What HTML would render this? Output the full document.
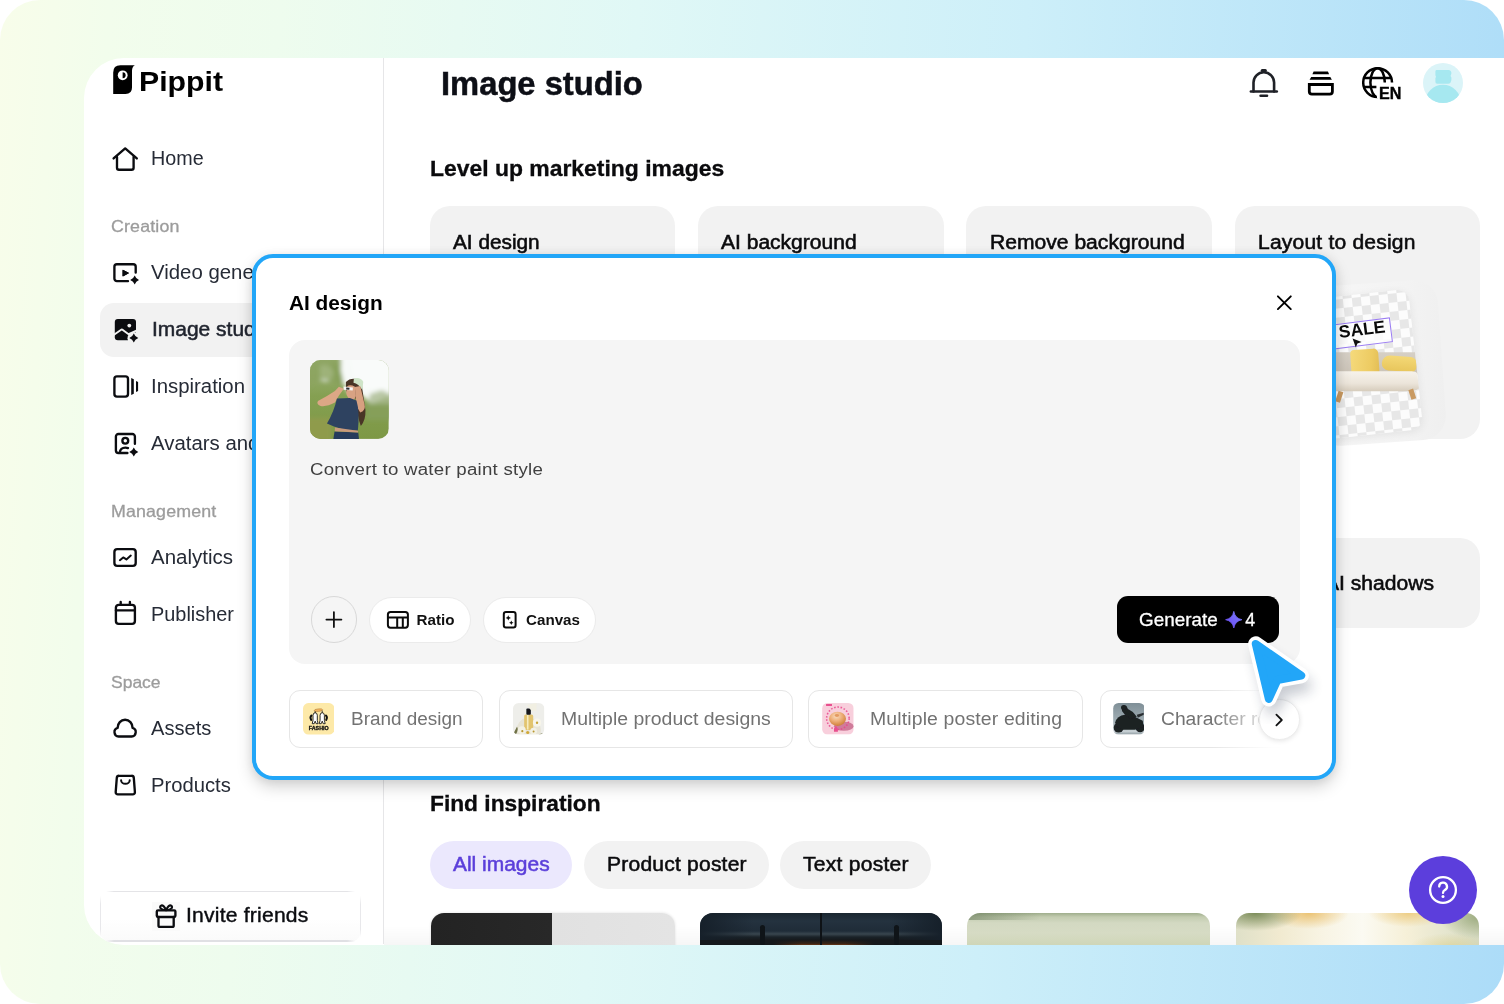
<!DOCTYPE html>
<html lang="en">
<head>
<meta charset="utf-8">
<title>Pippit - Image studio</title>
<style>
*{box-sizing:border-box;margin:0;padding:0}
html,body{width:1504px;height:1004px;overflow:hidden;background:#fff}
body{font-family:"Liberation Sans",sans-serif;color:#0f1115;position:relative}
.abs{position:absolute}
.t{position:absolute;white-space:nowrap;line-height:1}
#bg{left:0;top:0;width:1504px;height:1004px;border-radius:40px;
 background:linear-gradient(93deg,#f8fdea 0%,#f2fdec 7%,#eefcee 18%,#e0f8f6 41%,#cdeff9 66%,#acdcf8 100%)}
#app{left:84px;top:58px;width:1420px;height:886.7px;background:#fff;border-radius:40px 0 0 40px}
#clip{left:0;top:0;width:1504px;height:944.7px;overflow:hidden;will-change:transform}
</style>
</head>
<body>
<div id="bg" class="abs"></div>
<div id="app" class="abs"></div>
<div id="clip" class="abs">

<!-- p1_side -->
<div class="abs" style="left:383px;top:58px;width:1px;height:886px;background:#e6e6e8"></div>
<svg class="abs" style="left:111px;top:63px" width="28" height="34" viewBox="0 0 28 34"><path fill="#000" d="M2.2 31 V9.5 Q2.2 2.3 9.4 2.3 H23.9 Q21.2 3.6 21 7.5 V24.5 Q21 31 14.5 31 Z"/><circle cx="11.7" cy="12.3" r="4.9" fill="#fff"/><path fill="#000" d="M11.6 9.3 A3 3 0 0 1 11.6 15.3 Z"/></svg>
<div class="t" style="left:139.40px;top:68.00px;font-size:28px;color:#000;font-weight:700;transform-origin:0 0;transform:scaleX(1.0801);">Pippit</div>
<svg class="abs" style="left:111px;top:145px;" width="28" height="28" viewBox="0 0 28 28" fill="none" stroke="#0b0c10" stroke-width="2.35" stroke-linecap="round" stroke-linejoin="round"><path d="M2.6 13.4 L14.2 3.4 L25.8 13.4"/><path d="M6 12 V22.7 a2 2 0 0 0 2 2 H20.6 a2 2 0 0 0 2 -2 V12"/></svg>
<div class="t" style="left:151.30px;top:149.00px;font-size:19.5px;color:#262b36;transform-origin:0 0;transform:scaleX(1.0112);">Home</div>
<div class="t" style="left:110.80px;top:218.00px;font-size:16.5px;color:#9c9c9c;letter-spacing:0.138px;transform-origin:0 0;transform:scaleX(1.0800);-webkit-text-stroke:0.3px #9c9c9c;">Creation</div>
<svg class="abs" style="left:111px;top:258px;" width="28" height="28" viewBox="0 0 28 28" fill="none" stroke="#0b0c10" stroke-width="2.35" stroke-linecap="round" stroke-linejoin="round"><path d="M24.7 14.6 V8.7 a2.5 2.5 0 0 0 -2.5 -2.5 H5.9 a2.5 2.5 0 0 0 -2.5 2.5 V20.6 a2.5 2.5 0 0 0 2.5 2.5 H17"/><path stroke="none" fill="#0b0c10" d="M11.9 11.9 L18.1 15.1 L11.9 18.3 Z"/><path stroke="#0b0c10" stroke-width="1" fill="#0b0c10" d="M12.2 12.3 L17.4 15.1 L12.2 17.9 Z"/><path stroke="none" fill="#0b0c10" d="M23.7 17.5 Q24.915 20.785 28.2 22 Q24.915 23.215 23.7 26.5 Q22.485 23.215 19.2 22 Q22.485 20.785 23.7 17.5 Z"/></svg>
<div class="t" style="left:151.30px;top:263.00px;font-size:19.5px;color:#262b36;transform-origin:0 0;transform:scaleX(1.0450);">Video generator</div>
<div class="abs" style="left:100px;top:303px;width:272px;height:54px;border-radius:14px;background:#f2f2f2"></div>
<svg class="abs" style="left:111px;top:315px;" width="28" height="28" viewBox="0 0 28 28" fill="none" stroke="#0b0c10" stroke-width="2.35" stroke-linecap="round" stroke-linejoin="round"><rect x="3.8" y="4.1" width="21.2" height="21.2" rx="3" fill="#0b0c10" stroke="none"/><circle cx="18.3" cy="10.6" r="1.9" fill="#f2f2f2" stroke="none"/><path d="M3 19.8 L9.8 14.9 Q10.8 14.2 11.8 14.9 L17.6 19.2 L26 15.4" stroke="#f2f2f2" stroke-width="1.9"/><circle cx="22.8" cy="23.2" r="6.3" fill="#f2f2f2" stroke="none"/><path stroke="none" fill="#0b0c10" d="M22.8 18.6 Q24.015 21.885 27.3 23.1 Q24.015 24.315 22.8 27.6 Q21.585 24.315 18.3 23.1 Q21.585 21.885 22.8 18.6 Z"/></svg>
<div class="t" style="left:151.60px;top:320.00px;font-size:19.5px;color:#1f232d;transform-origin:0 0;transform:scaleX(1.0750);-webkit-text-stroke:0.5px #1f232d;">Image studio</div>
<svg class="abs" style="left:111px;top:372px;" width="28" height="28" viewBox="0 0 28 28" fill="none" stroke="#0b0c10" stroke-width="2.35" stroke-linecap="round" stroke-linejoin="round"><rect x="3.4" y="4.4" width="13.6" height="20.2" rx="2.6"/><path stroke="none" fill="#0b0c10" d="M20.2 6 L22.8 7.2 V21.8 L20.2 23 Z M25 9 L27.1 10 V19 L25 20 Z"/></svg>
<div class="t" style="left:151.30px;top:377.00px;font-size:19.5px;color:#262b36;transform-origin:0 0;transform:scaleX(1.0450);">Inspiration</div>
<svg class="abs" style="left:111px;top:429px;" width="28" height="28" viewBox="0 0 28 28" fill="none" stroke="#0b0c10" stroke-width="2.35" stroke-linecap="round" stroke-linejoin="round"><path d="M23.9 14.8 V7.5 a2.5 2.5 0 0 0 -2.5 -2.5 H7.4 a2.5 2.5 0 0 0 -2.5 2.5 V21.5 a2.5 2.5 0 0 0 2.5 2.5 H16.4"/><circle cx="14.3" cy="11.7" r="2.9"/><path d="M8.9 23.6 C8.9 20.6 11.2 18.6 14.4 18.6 C15.4 18.6 16.3 18.8 17 19.1"/><path stroke="none" fill="#0b0c10" d="M22.8 18.6 Q24.015 21.885 27.3 23.1 Q24.015 24.315 22.8 27.6 Q21.585 24.315 18.3 23.1 Q21.585 21.885 22.8 18.6 Z"/></svg>
<div class="t" style="left:151.30px;top:434.00px;font-size:19.5px;color:#262b36;transform-origin:0 0;transform:scaleX(1.0450);">Avatars and video</div>
<div class="t" style="left:110.80px;top:503.00px;font-size:16.5px;color:#9c9c9c;letter-spacing:0.122px;transform-origin:0 0;transform:scaleX(1.0800);-webkit-text-stroke:0.3px #9c9c9c;">Management</div>
<svg class="abs" style="left:111px;top:543px;" width="28" height="28" viewBox="0 0 28 28" fill="none" stroke="#0b0c10" stroke-width="2.35" stroke-linecap="round" stroke-linejoin="round"><rect x="3.4" y="6.1" width="21.3" height="16.8" rx="2.8"/><path d="M8.9 17.2 L12.2 14.4 L15.4 16.4 L19.8 12.6" stroke-width="2"/></svg>
<div class="t" style="left:151.30px;top:548.00px;font-size:19.5px;color:#262b36;transform-origin:0 0;transform:scaleX(1.0509);">Analytics</div>
<svg class="abs" style="left:111px;top:600px;" width="28" height="28" viewBox="0 0 28 28" fill="none" stroke="#0b0c10" stroke-width="2.35" stroke-linecap="round" stroke-linejoin="round"><rect x="4.9" y="4.8" width="19" height="19" rx="2.8"/><path d="M9.7 1.9 V4.8 M18.9 1.9 V4.8 M4.9 10.3 H23.9"/></svg>
<div class="t" style="left:151.30px;top:605.00px;font-size:19.5px;color:#262b36;transform-origin:0 0;transform:scaleX(1.0209);">Publisher</div>
<div class="t" style="left:110.80px;top:674.00px;font-size:16.5px;color:#9c9c9c;transform-origin:0 0;transform:scaleX(1.0601);-webkit-text-stroke:0.3px #9c9c9c;">Space</div>
<svg class="abs" style="left:111px;top:714px;" width="28" height="28" viewBox="0 0 28 28" fill="none" stroke="#0b0c10" stroke-width="2.35" stroke-linecap="round" stroke-linejoin="round"><path d="M7.6 22.5 H20.6 A4.4 4.4 0 0 0 21.6 13.9 C21.6 9.4 18.3 5.7 14.1 5.7 C9.9 5.7 6.6 9.4 6.6 13.9 A4.4 4.4 0 0 0 7.6 22.5 Z"/></svg>
<div class="t" style="left:151.30px;top:719.00px;font-size:19.5px;color:#262b36;transform-origin:0 0;transform:scaleX(1.0304);">Assets</div>
<svg class="abs" style="left:111px;top:771px;" width="28" height="28" viewBox="0 0 28 28" fill="none" stroke="#0b0c10" stroke-width="2.35" stroke-linecap="round" stroke-linejoin="round"><path d="M8 4.8 H20.6 a2.2 2.2 0 0 1 2.2 2 L23.9 21 a2.2 2.2 0 0 1 -2.2 2.4 H6.9 a2.2 2.2 0 0 1 -2.2 -2.4 L5.8 6.8 a2.2 2.2 0 0 1 2.2 -2 Z"/><path d="M10.1 9.2 a4.3 3.6 0 0 0 8.6 0" stroke-width="2"/></svg>
<div class="t" style="left:151.30px;top:776.00px;font-size:19.5px;color:#262b36;transform-origin:0 0;transform:scaleX(1.0370);">Products</div>
<div class="abs" style="left:100px;top:891px;width:261px;height:51px;border-radius:11px;background:linear-gradient(#fff 55%,#fafafa)"></div>
<div class="abs" style="left:106px;top:890.6px;width:249px;height:1.6px;background:linear-gradient(90deg,rgba(228,228,231,0),#e4e4e7 8px,#e4e4e7 241px,rgba(228,228,231,0))"></div>
<div class="abs" style="left:106px;top:940.3px;width:249px;height:1.7px;background:linear-gradient(90deg,rgba(224,224,228,0),#e0e0e4 8px,#e0e0e4 241px,rgba(224,224,228,0))"></div>
<div class="abs" style="left:99.8px;top:896px;width:1.1px;height:41px;background:linear-gradient(rgba(230,230,233,0),#e8e8eb 8px,#e8e8eb 33px,rgba(230,230,233,0))"></div>
<div class="abs" style="left:360.2px;top:896px;width:1.1px;height:41px;background:linear-gradient(rgba(230,230,233,0),#e8e8eb 8px,#e8e8eb 33px,rgba(230,230,233,0))"></div>
<div class="abs" style="left:151.6px;top:902px;width:28.6px;height:28.6px;background:#fafafa"></div>
<svg class="abs" style="left:152px;top:902px;" width="28" height="28" viewBox="0 0 28 28" fill="none" stroke="#0b0c10" stroke-width="2.35" stroke-linecap="round" stroke-linejoin="round"><rect x="4.8" y="8.4" width="18.6" height="6.6" rx="1.2"/><path d="M6.5 15 V23.4 a1.4 1.4 0 0 0 1.4 1.4 H20.3 a1.4 1.4 0 0 0 1.4 -1.4 V15"/><path d="M14 8.2 C12.8 4.4 10.4 2.6 8.8 3.8 C7.2 5 8.4 8 14 8.2 Z M14.2 8.2 C15.4 4.4 17.8 2.6 19.4 3.8 C21 5 19.8 8 14.2 8.2 Z" stroke-width="2.1"/></svg>
<div class="t" style="left:185.60px;top:906.00px;font-size:19.5px;color:#0b0c10;letter-spacing:0.207px;transform-origin:0 0;transform:scaleX(1.0800);-webkit-text-stroke:0.4px #0b0c10;">Invite friends</div>
<!-- p2_main -->
<div class="t" style="left:441.40px;top:67.00px;font-size:33px;color:#0d0f16;font-weight:700;transform-origin:0 0;transform:scaleX(0.9915);-webkit-text-stroke:0.5px #0d0f16;">Image studio</div>
<div class="t" style="left:430.00px;top:158.00px;font-size:22px;color:#0b0b0d;font-weight:700;transform-origin:0 0;transform:scaleX(1.0416);-webkit-text-stroke:0.3px #0b0b0d;">Level up marketing images</div>
<svg class="abs" style="left:1244px;top:63px" width="40" height="40" viewBox="0 0 40 40" fill="none" stroke="#1f2127" stroke-width="2.6" stroke-linecap="round" stroke-linejoin="round"><path d="M9.5 28.4 V19.6 A10.3 10.3 0 0 1 30.1 19.6 V28.4"/><path d="M6.9 28.5 H32.8"/><path d="M16.6 32.7 H23"/><path d="M18.2 7.6 H21.4" stroke-width="3"/></svg>
<svg class="abs" style="left:1301px;top:63px" width="40" height="40" viewBox="0 0 40 40" fill="#000"><path d="M12.6 8.4 H26.9 L28.1 11.2 H11.4 Z"/><path d="M10.2 14 H29.3 L30.9 16.8 H8.6 Z"/><path fill-rule="evenodd" d="M6.9 20.1 H32.8 V28.6 Q32.8 32.6 28.8 32.6 H10.9 Q6.9 32.6 6.9 28.6 Z M9.7 22.9 V28.4 Q9.7 29.8 11.1 29.8 H28.6 Q30 29.8 30 28.4 V22.9 Z"/></svg>
<svg class="abs" style="left:1357px;top:62px" width="50" height="42" viewBox="0 0 50 42" fill="none" stroke="#000" stroke-width="2.5"><defs><clipPath id="gcl"><path d="M0 0 H50 V20.4 H19.4 V27 L18 29 L22 42 H0 Z"/></clipPath></defs><g clip-path="url(#gcl)"><circle cx="20.6" cy="20.6" r="14.4"/><ellipse cx="20.6" cy="20.6" rx="7.2" ry="14.4"/><path d="M7.2 15.9 H34 M6.6 25 H34.6"/></g></svg>
<div class="t" style="left:1378.80px;top:85.00px;font-size:17px;color:#000;font-weight:700;transform-origin:0 0;transform:scaleX(0.9485);-webkit-text-stroke:0.4px #000;">EN</div>
<svg class="abs" style="left:1423px;top:63px" width="40" height="40" viewBox="0 0 40 40"><defs><clipPath id="avc"><circle cx="20" cy="20" r="20"/></clipPath></defs><circle cx="20" cy="20" r="20" fill="#dbf4f8"/><g clip-path="url(#avc)" fill="#a6e8f0"><circle cx="20" cy="39.5" r="17.8"/><path d="M13.4 7 H26 Q28.6 7.6 28.4 10.4 Q27 12.4 28.4 14.6 Q28.8 17.6 27.6 19.6 Q26.6 21 24.6 20.8 H14.2 Q12.2 20.8 12.4 18.6 V15.2 Q13.6 13.6 12.4 12.2 V8.6 Q12.4 7 13.4 7 Z"/></g></svg>
<div class="abs" style="left:429.8px;top:206px;width:245.6px;height:233px;border-radius:20px;background:#f2f2f2"></div>
<div class="t" style="left:453.00px;top:233.00px;font-size:19.5px;color:#0b0b0d;transform-origin:0 0;transform:scaleX(1.0651);-webkit-text-stroke:0.55px #0b0b0d;">AI design</div>
<div class="abs" style="left:698.1px;top:206px;width:245.6px;height:233px;border-radius:20px;background:#f2f2f2"></div>
<div class="t" style="left:721.30px;top:233.00px;font-size:19.5px;color:#0b0b0d;transform-origin:0 0;transform:scaleX(1.0783);-webkit-text-stroke:0.55px #0b0b0d;">AI background</div>
<div class="abs" style="left:966.4px;top:206px;width:245.6px;height:233px;border-radius:20px;background:#f2f2f2"></div>
<div class="t" style="left:989.60px;top:233.00px;font-size:19.5px;color:#0b0b0d;letter-spacing:0.015px;transform-origin:0 0;transform:scaleX(1.0800);-webkit-text-stroke:0.55px #0b0b0d;">Remove background</div>
<div class="abs" style="left:1234.8px;top:206px;width:245.6px;height:233px;border-radius:20px;background:#f2f2f2"></div>
<div class="t" style="left:1258.00px;top:233.00px;font-size:19.5px;color:#0b0b0d;letter-spacing:0.175px;transform-origin:0 0;transform:scaleX(1.0800);-webkit-text-stroke:0.55px #0b0b0d;">Layout to design</div>
<div class="abs" style="left:1312px;top:283px;width:130px;height:160px;border-radius:24px;background:linear-gradient(95deg,#f7f7f7,#f3f3f3 70%,#efefef);transform:rotate(-4deg);transform-origin:50% 50%"></div>
<div class="abs" style="left:1312px;top:293.5px;width:104px;height:141px;border-radius:12px;transform:rotate(-6.2deg);overflow:hidden;background:conic-gradient(#e7e7e7 25%,#fcfcfc 0 50%,#e7e7e7 0 75%,#fcfcfc 0) 2px 3px/18px 18px;box-shadow:0 2px 8px rgba(0,0,0,.07)">
 <div class="abs" style="left:-2px;top:-2px;width:104px;height:141px;transform:rotate(6.2deg)">
  <div class="abs" style="left:-12px;top:60px;width:124px;height:22px;border-radius:0 6px 0 0;background:linear-gradient(#d6d0c6,#cbc3b7)"></div>
  <div class="abs" style="left:40.6px;top:56.8px;width:28px;height:25px;border-radius:4px 5px 3px 3px;background:linear-gradient(100deg,#f5da7c,#edcb62 70%,#e2bd55);transform:rotate(-4deg)"></div>
  <div class="abs" style="left:71.5px;top:63.6px;width:35px;height:14.5px;border-radius:10px 8px 7px 9px;background:linear-gradient(#f4d876,#e8c65c);transform:rotate(4deg)"></div>
  <div class="abs" style="left:-12px;top:79px;width:124px;height:20px;border-radius:0 10px 10px 0;background:linear-gradient(#f6f2eb,#ece5da 60%,#d6ccbc)"></div>
  <div class="abs" style="left:100px;top:97px;width:4.5px;height:10px;background:#c99a62;transform:rotate(-18deg)"></div>
  <div class="abs" style="left:27px;top:99px;width:4.5px;height:11px;background:#c99a62;transform:rotate(18deg)"></div>
 </div>
 <div class="abs" style="left:6px;top:27px;width:77px;height:25px;border:1.2px solid #9a7cf2;background:rgba(255,255,255,.82);transform:rotate(-1deg)"></div>
</div>
<div class="t" style="left:1339.80px;top:324.00px;font-size:17.5px;color:#0a0a0a;font-weight:700;transform-origin:0 0;transform:scaleX(0.9084);transform:rotate(-7deg);transform-origin:0 100%;">SALE</div>
<svg class="abs" style="left:1350px;top:336px" width="14" height="14" viewBox="0 0 14 14"><path d="M2.6 2.6 L11.6 6 L7.4 7.4 L5.8 11.6 Z" fill="#111"/></svg>
<div class="abs" style="left:1234.8px;top:538px;width:245.6px;height:90.4px;border-radius:20px;background:#f2f2f2"></div>
<div class="t" style="left:1325.30px;top:574.00px;font-size:19.5px;color:#0b0b0d;letter-spacing:0.013px;transform-origin:0 0;transform:scaleX(1.0800);-webkit-text-stroke:0.55px #0b0b0d;">AI shadows</div>
<div class="t" style="left:430.00px;top:793.00px;font-size:22px;color:#0b0b0d;font-weight:700;transform-origin:0 0;transform:scaleX(1.0340);-webkit-text-stroke:0.3px #0b0b0d;">Find inspiration</div>
<div class="abs" style="left:430px;top:841px;width:142px;height:48px;border-radius:24px;background:#ebe8fd"></div>
<div class="t" style="left:453.30px;top:855.00px;font-size:19.5px;color:#5b3fda;transform-origin:0 0;transform:scaleX(1.0739);-webkit-text-stroke:0.5px #5b3fda;">All images</div>
<div class="abs" style="left:583.5px;top:841px;width:185px;height:48px;border-radius:24px;background:#f2f2f2"></div>
<div class="t" style="left:606.80px;top:855.00px;font-size:19.5px;color:#0b0b0d;letter-spacing:0.188px;transform-origin:0 0;transform:scaleX(1.0800);-webkit-text-stroke:0.5px #0b0b0d;">Product poster</div>
<div class="abs" style="left:780px;top:841px;width:151px;height:48px;border-radius:24px;background:#f2f2f2"></div>
<div class="t" style="left:803.30px;top:855.00px;font-size:19.5px;color:#0b0b0d;letter-spacing:0.240px;transform-origin:0 0;transform:scaleX(1.0800);-webkit-text-stroke:0.5px #0b0b0d;">Text poster</div>
<div class="abs" style="left:384px;top:926px;width:1120px;height:19px;background:linear-gradient(rgba(0,0,0,0),rgba(0,0,0,.035))"></div>
<div class="abs" style="left:431.2px;top:912.6px;width:243.5px;height:60px;border-radius:13px;background:linear-gradient(90deg,#232323 0,#282828 49.4%,#e1e1e1 49.7%,#e4e4e4 100%);box-shadow:0 0 3px rgba(0,0,0,.12)"></div>
<div class="abs" style="left:699.5px;top:912.6px;width:242.2px;height:60px;border-radius:13px;overflow:hidden;background:linear-gradient(#1a2630 0,#24323f 8px,#1f2c38 18px,#39464f 21px,#1a2228 24px,#16191c 27px,#3a2416 30.5px,#8a4418 33px)"><div class="abs" style="left:0;top:0;width:242px;height:40px;background:radial-gradient(70px 14px at 50% 33px,rgba(214,98,28,.0),rgba(20,26,32,.0) 100%),linear-gradient(90deg,#16202a 0,rgba(22,32,42,.0) 22%,rgba(22,32,42,0) 78%,#16202a 100%)"></div><div class="abs" style="left:0;top:27px;width:242px;height:10px;background:linear-gradient(90deg,#15181b 0,#15181b 30%,rgba(21,24,27,0) 42%,rgba(21,24,27,0) 60%,#15181b 72%)"></div><div class="abs" style="left:120px;top:0;width:2px;height:32px;background:#0e1216"></div><div class="abs" style="left:60px;top:12px;width:5px;height:20px;border-radius:3px;background:#0f1418"></div><div class="abs" style="left:194px;top:12px;width:5px;height:20px;border-radius:3px;background:#0f1418"></div></div>
<div class="abs" style="left:967.1px;top:912.6px;width:243.2px;height:60px;border-radius:13px;background:linear-gradient(90deg,rgba(96,116,84,.55) 0,rgba(96,116,84,0) 30%) 0 0/100% 7px no-repeat,linear-gradient(#9fae8c 0,#c3ccb0 4px,#d3d9c2 10px,#d6dbc4 20px,#cfd6b8 32px)"></div>
<div class="abs" style="left:1235.8px;top:912.6px;width:243px;height:60px;border-radius:13px;background:radial-gradient(46px 18px at 8% 0,rgba(118,136,84,.95),rgba(118,136,84,0) 100%),radial-gradient(40px 16px at 30% 0,rgba(234,190,104,.9),rgba(234,190,104,0) 100%),radial-gradient(40px 14px at 71% 0,rgba(236,200,120,.85),rgba(236,200,120,0) 100%),radial-gradient(40px 22px at 100% 4px,rgba(150,166,120,.9),rgba(150,166,120,0) 100%),radial-gradient(40px 14px at 88% 34px,rgba(214,200,120,.5),rgba(214,200,120,0) 100%),linear-gradient(90deg,#dfe0c8 0,#f1ead0 18%,#f8f4e4 36%,#fbfaf2 52%,#f6f0d8 70%,#e6e6cf 86%,#d6dac2 100%)"></div>
<div class="abs" style="left:1409px;top:856px;width:68px;height:68px;border-radius:50%;background:#5c3edc"></div>
<svg class="abs" style="left:1427px;top:874px" width="32" height="32" viewBox="0 0 32 32" fill="none" stroke="#fff" stroke-width="2.3" stroke-linecap="round" stroke-linejoin="round"><circle cx="16" cy="16" r="12.9"/><path d="M12.2 12.6 a3.9 3.9 0 1 1 5.6 3.5 c-1.2 .7 -1.8 1.4 -1.8 2.8"/><circle cx="16" cy="22.6" r="1.5" fill="#fff" stroke="none"/></svg>
<!-- p3_modal -->
<div class="abs" style="left:252px;top:253.7px;width:1084px;height:526.3px;border-radius:21px;background:#fff;border:4px solid #22a6f8;box-shadow:0 7px 16px rgba(0,0,0,.17),0 1px 12px rgba(0,0,0,.07)"></div>
<div class="t" style="left:289.30px;top:293.00px;font-size:20px;color:#000;font-weight:700;transform-origin:0 0;transform:scaleX(1.0399);">AI design</div>
<svg class="abs" style="left:1274px;top:292px" width="21" height="21" viewBox="0 0 21 21" fill="none" stroke="#000" stroke-width="1.9" stroke-linecap="round"><path d="M3.9 4.3 L16.8 17.1 M16.8 4.3 L3.9 17.1"/></svg>
<div class="abs" style="left:289.2px;top:339.6px;width:1011px;height:324.2px;border-radius:16px;background:#f5f5f5"></div>
<svg class="abs" style="left:310.2px;top:360px" width="78.8" height="79" viewBox="0 0 79 79"><defs><clipPath id="thc"><rect width="79" height="79" rx="10.5"/></clipPath><filter id="b2" x="-30%" y="-30%" width="160%" height="160%"><feGaussianBlur stdDeviation="2.2"/></filter><filter id="b1" x="-20%" y="-20%" width="140%" height="140%"><feGaussianBlur stdDeviation=".55"/></filter><linearGradient id="grs" x1="0" y1="0" x2="0" y2="1"><stop offset="0" stop-color="#9cb07a"/><stop offset=".45" stop-color="#85a052"/><stop offset="1" stop-color="#7d9845"/></linearGradient></defs><g clip-path="url(#thc)"><rect width="79" height="79" fill="url(#grs)"/><g filter="url(#b2)"><path d="M31 -8 H90 V38 L76 37 L62 44 L50 34 L38 32 Q28 18 31 -8 Z" fill="#f7faf8"/><path d="M40 -4 H84 V28 H46 Z" fill="#f9fbfa"/><path d="M10 6 Q18 2 24 12 Q20 26 10 20 Z" fill="#e3ebe0"/><path d="M-6 -6 H30 Q34 10 26 24 Q14 16 4 22 L-6 30 Z" fill="#8ca45f" opacity=".8"/><path d="M22 2 Q32 6 33 22 L26 26 Z" fill="#86a05a" opacity=".9"/><path d="M-6 58 H22 V86 H-6 Z" fill="#8f9b4b"/><path d="M56 44 H90 V60 H56 Z" fill="#86a05c" opacity=".85"/><path d="M60 34 L72 30 L84 36 V44 H58 Z" fill="#a9ba90" opacity=".8"/></g><g filter="url(#b1)"><path d="M36 22 Q40 17.5 47 19 Q52.5 21 52.6 30 L55.6 50 Q56 60 51 66 Q47 56 47 42 L44.5 36 Q38 36 36 30 Z" fill="#4a3427"/><path d="M44 18.4 Q50.4 16.6 53.4 21.6 L52.6 30 Q48.6 23.6 43.6 22.6 Z" fill="#cfe4c8"/><path d="M37 26.6 Q40 24 45 26.6 L46 36 L44 40 L40 39 Q36 36 36.4 32 Z" fill="#d8a283"/><path d="M8 41 Q16 37 25 31 L29 26.6 L34 28.6 L29 35.6 L25 42.6 Q17 47 10.6 46 Q6 44 8 41 Z" fill="#dca786"/><path d="M45 27 L50.4 26 L54.6 44 Q56.4 50.4 50.4 52.6 L46.4 46 Z" fill="#d7a080"/><path d="M33.6 26.4 L43 27.4 L42.8 30.4 L33.8 29.6 Z" fill="#f6f6f6"/><path d="M36.4 27.4 L39.6 27.8 L39.4 29.8 L36.2 29.4 Z" fill="#2a2a2e"/><path d="M27 38.6 L40 38 L46.6 40.6 Q50 52 48 70.6 L36 70.4 L24 66.6 L17 63.6 Q24 52 27 38.6 Z" fill="#2f4261"/><path d="M24.6 71.6 L48.4 72.6 L49.4 82 H23 Z" fill="#273b5b"/><path d="M25 67.6 L48 70.8 L48.2 72.6 L24.8 71.4 Z" fill="#c99a7c"/></g></g></svg>
<div class="t" style="left:310.40px;top:461.00px;font-size:17.3px;color:#404040;letter-spacing:0.227px;transform-origin:0 0;transform:scaleX(1.0800);">Convert to water paint style</div>
<div class="abs" style="left:310.6px;top:596.3px;width:46.6px;height:46.6px;border-radius:50%;border:1px solid #d8d8d8;background:#f5f5f5"></div>
<svg class="abs" style="left:322px;top:608px" width="24" height="24" viewBox="0 0 24 24" fill="none" stroke="#111" stroke-width="1.8" stroke-linecap="round"><path d="M4.4 11.6 H19.4 M11.9 4.1 V19.1"/></svg>
<div class="abs" style="left:368.8px;top:596.8px;width:102.2px;height:45.8px;border-radius:23px;border:1px solid #ebebeb;background:#fff"></div>
<svg class="abs" style="left:384px;top:608px" width="28" height="24" viewBox="0 0 28 24" fill="none" stroke="#0b0b0b" stroke-width="2" stroke-linejoin="round"><rect x="3.9" y="3.9" width="20" height="15.8" rx="2.6"/><path d="M3.9 9.4 H23.9 M13.2 9.4 V19.7 M18.8 9.4 V19.7"/></svg>
<div class="t" style="left:416.60px;top:612.00px;font-size:15.2px;color:#111;font-weight:700;">Ratio</div>
<div class="abs" style="left:483.4px;top:596.8px;width:112.2px;height:45.8px;border-radius:23px;border:1px solid #ebebeb;background:#fff"></div>
<svg class="abs" style="left:499px;top:608px" width="22" height="24" viewBox="0 0 22 24" fill="none" stroke="#0b0b0b" stroke-width="2" stroke-linejoin="round"><rect x="4.8" y="4.1" width="11.8" height="15.4" rx="2.2"/><path stroke="none" fill="#0b0b0b" d="M9.3 7.2 Q9.7 9.5 12 9.9 Q9.7 10.3 9.3 12.6 Q8.9 10.3 6.6 9.9 Q8.9 9.5 9.3 7.2 Z M12.3 12.5 Q12.6 14.4 14.5 14.7 Q12.6 15 12.3 16.9 Q12 15 10.1 14.7 Q12 14.4 12.3 12.5 Z"/></svg>
<div class="t" style="left:525.60px;top:612.00px;font-size:15.2px;color:#111;font-weight:700;transform-origin:0 0;transform:scaleX(0.9986);">Canvas</div>
<div class="abs" style="left:1116.7px;top:595.8px;width:162.4px;height:47.2px;border-radius:11px;background:#000"></div>
<div class="t" style="left:1139.30px;top:612.00px;font-size:17.8px;color:#fff;transform-origin:0 0;transform:scaleX(1.0617);-webkit-text-stroke:0.3px #fff;">Generate</div>
<svg class="abs" style="left:1224px;top:610px" width="20" height="20" viewBox="0 0 20 20"><defs><linearGradient id="stg" x1="1" y1="0" x2="0" y2="1"><stop offset="0" stop-color="#7d80ff"/><stop offset="1" stop-color="#6a47f2"/></linearGradient></defs><path fill="url(#stg)" stroke="url(#stg)" stroke-width=".8" stroke-linejoin="round" d="M9.8 1.4 Q11.1 8.4 18 9.7 Q11.1 11 9.8 18 Q8.5 11 1.6 9.7 Q8.5 8.4 9.8 1.4 Z"/></svg>
<div class="t" style="left:1245.20px;top:612.00px;font-size:17.8px;color:#fff;-webkit-text-stroke:0.3px #fff;">4</div>
<div class="abs" style="left:289.2px;top:690.2px;width:194px;height:57.6px;border-radius:11px;border:1px solid #e6e6e6;background:#fff"></div>
<div class="t" style="left:350.60px;top:710.00px;font-size:18px;color:#727272;transform-origin:0 0;transform:scaleX(1.0520);">Brand design</div>
<div class="abs" style="left:499.4px;top:690.2px;width:293.2px;height:57.6px;border-radius:11px;border:1px solid #e6e6e6;background:#fff"></div>
<div class="t" style="left:561.10px;top:710.00px;font-size:18px;color:#727272;letter-spacing:0.006px;transform-origin:0 0;transform:scaleX(1.0800);">Multiple product designs</div>
<div class="abs" style="left:808.4px;top:690.2px;width:274.8px;height:57.6px;border-radius:11px;border:1px solid #e6e6e6;background:#fff"></div>
<div class="t" style="left:870.10px;top:710.00px;font-size:18px;color:#727272;letter-spacing:0.122px;transform-origin:0 0;transform:scaleX(1.0800);">Multiple poster editing</div>
<div class="abs" style="left:1099.5px;top:690.2px;width:220px;height:57.6px;border-radius:11px;border:1px solid #e6e6e6;background:#fff"></div>
<div class="t" style="left:1160.60px;top:710.00px;font-size:18px;color:#727272;transform-origin:0 0;transform:scaleX(1.0700);">Character reference</div>
<svg class="abs" style="left:303px;top:703.3px" width="31.4" height="31.6" viewBox="0 0 32 32"><rect width="32" height="32" rx="5.5" fill="#fde9a8"/><ellipse cx="15.6" cy="7.2" rx="4.4" ry="1.3" fill="#f3b562" stroke="#a8712c" stroke-width=".5" transform="rotate(-6 15.6 7.2)"/><g fill="#fff" stroke="#111" stroke-width=".9" stroke-linejoin="round"><path d="M10.2 12.4 q.2 -2.6 2.2 -2.6 q2 0 2.2 2.6 v5.2 l.8 3.4 h-2 l-1 -2.6 l-1 2.6 h-2 l.8 -3.4 z"/><path d="M17.4 12.4 q.2 -2.6 2.2 -2.6 q2 0 2.2 2.6 v5.2 l.8 3.4 h-2 l-1 -2.6 l-1 2.6 h-2 l.8 -3.4 z"/></g><path d="M8.6 12.6 q-1.9 1.8 -.2 4.6 M23.4 12.6 q1.9 1.8 .2 4.6" stroke="#111" stroke-width="2" fill="none" stroke-linecap="round"/><path d="M12.4 8.2 v2 M19.6 7.6 v2.4" stroke="#111" stroke-width=".8"/><text x="16" y="27.2" text-anchor="middle" font-family="Liberation Sans,sans-serif" font-weight="700" font-size="5.4" fill="#111" stroke="#111" stroke-width=".35">FASHIO</text></svg>
<svg class="abs" style="left:513.2px;top:703.3px" width="31.4" height="31.6" viewBox="0 0 32 32"><defs><clipPath id="c2"><rect width="32" height="32" rx="5.5"/></clipPath><filter id="bb" x="-30%" y="-30%" width="160%" height="160%"><feGaussianBlur stdDeviation=".6"/></filter></defs><g clip-path="url(#c2)"><rect width="32" height="32" fill="#eeeeea"/><g filter="url(#bb)"><path d="M4 32 Q2 22 10 16 L22 16 Q30 22 28 32 Z" fill="#e7e4d6"/><rect x="11.4" y="11.5" width="9.2" height="16" rx="1.6" fill="#e2c46e"/><rect x="14.2" y="12" width="1.6" height="15" fill="#f6ecc0"/><rect x="13.6" y="5.6" width="4.6" height="6.2" rx="1" fill="#15191f"/><path d="M14 2 L24 0 L24 8 L19 8 Z" fill="#f1efe2"/><circle cx="24.5" cy="20" r="4.2" fill="#f7f5ea"/><circle cx="24.5" cy="20" r="1.2" fill="#c9a53a"/><circle cx="9" cy="27.5" r="4" fill="#f3f1e4"/><circle cx="9.5" cy="28.6" r="1.1" fill="#b8962e"/><circle cx="21" cy="28.6" r="3.4" fill="#f3f1e4"/><circle cx="21" cy="29" r="1" fill="#b8962e"/><circle cx="15" cy="30" r="1.6" fill="#d1a736"/><path d="M3 32 Q6 26 4 24 L0 32 Z M26 32 L32 30 V32 Z" fill="#6f7146"/></g></g></svg>
<svg class="abs" style="left:822px;top:703.3px" width="31.8" height="31.6" viewBox="0 0 32 32"><defs><clipPath id="c3"><rect width="32" height="32" rx="5.5"/></clipPath><filter id="bc" x="-30%" y="-30%" width="160%" height="160%"><feGaussianBlur stdDeviation=".7"/></filter><radialGradient id="dn" cx=".42" cy=".32" r=".75"><stop offset="0" stop-color="#f8dcc0"/><stop offset=".45" stop-color="#eeb07a"/><stop offset="1" stop-color="#c9762c"/></radialGradient></defs><g clip-path="url(#c3)"><rect width="32" height="32" fill="#f8cfdc"/><g filter="url(#bc)"><ellipse cx="22" cy="23.5" rx="10" ry="4.6" fill="#c5668a" opacity=".8"/><circle cx="16" cy="15.5" r="11.4" fill="none" stroke="#e9478c" stroke-width="1.6" stroke-dasharray="1.6 1.7" opacity=".85"/><ellipse cx="15.6" cy="16" rx="8.6" ry="7.2" fill="url(#dn)"/><ellipse cx="15" cy="12.6" rx="2.2" ry="1.5" fill="#e39a62"/><path d="M4 1 h6 v2 h-6 z M12 26 l2 -3 l2 3 v3 h-4 z" fill="#e8508f"/></g></g></svg>
<svg class="abs" style="left:1112.6px;top:703.3px" width="31.8" height="31.6" viewBox="0 0 32 32"><defs><clipPath id="c4"><rect width="32" height="32" rx="5.5"/></clipPath><filter id="bd" x="-30%" y="-30%" width="160%" height="160%"><feGaussianBlur stdDeviation=".6"/></filter><linearGradient id="mg" x1="0" y1="0" x2="0" y2="1"><stop offset="0" stop-color="#7f8f97"/><stop offset=".6" stop-color="#a3b0b6"/><stop offset=".9" stop-color="#c7d0d4"/><stop offset="1" stop-color="#8d9aa0"/></linearGradient></defs><g clip-path="url(#c4)"><rect width="32" height="32" fill="url(#mg)"/><g filter="url(#bd)" fill="#1b2023"><circle cx="5.6" cy="25" r="5"/><circle cx="27.4" cy="25" r="4.6"/><path d="M2 20 Q4 13 12 12 L22 14 L30 18 L31 24 L22 27 H10 L4 24 Z"/><path d="M9 4 Q11 1 13.6 3 L15 6 L20 9 L24 14 L18 16 L12 12 L9 8 Z"/><circle cx="10.6" cy="4.6" r="2.6"/><path d="M24 12 L31 10 L31 12 L25 15 Z" fill="#2a2f33"/></g></g></svg>
<div class="abs" style="left:1212px;top:686px;width:120px;height:66px;background:linear-gradient(90deg,rgba(255,255,255,0) 0,rgba(255,255,255,.55) 28%,rgba(255,255,255,.96) 50%,#fff 62%)"></div>
<div class="abs" style="left:1259px;top:699.2px;width:40.6px;height:40.6px;border-radius:50%;background:#fff;border:1px solid #ededed;box-shadow:0 1px 5px rgba(0,0,0,.1)"></div>
<svg class="abs" style="left:1269.3px;top:709.6px" width="20" height="20" viewBox="0 0 20 20" fill="none" stroke="#111" stroke-width="1.8" stroke-linecap="round" stroke-linejoin="round"><path d="M7.4 4.6 L12.8 10 L7.4 15.4"/></svg>
<svg class="abs" style="left:1236px;top:624px" width="90" height="100" viewBox="0 0 90 100"><defs><filter id="cs" x="-40%" y="-40%" width="180%" height="180%"><feGaussianBlur stdDeviation="6.5"/></filter></defs><path d="M19.8 20 L65.2 51.6 L41.4 56 L32.8 74.8 Z" fill="#1e2a44" stroke="#1e2a44" stroke-width="13" stroke-linejoin="round" opacity=".24" filter="url(#cs)" transform="translate(4,10)"/><path d="M19.8 20 L65.2 51.6 L41.4 56 L32.8 74.8 Z" fill="#fff" stroke="#fff" stroke-width="15.4" stroke-linejoin="round"/><path d="M19.8 20 L65.2 51.6 L41.4 56 L32.8 74.8 Z" fill="#22a6f8" stroke="#22a6f8" stroke-width="8" stroke-linejoin="round"/></svg>

</div>
</body>
</html>
